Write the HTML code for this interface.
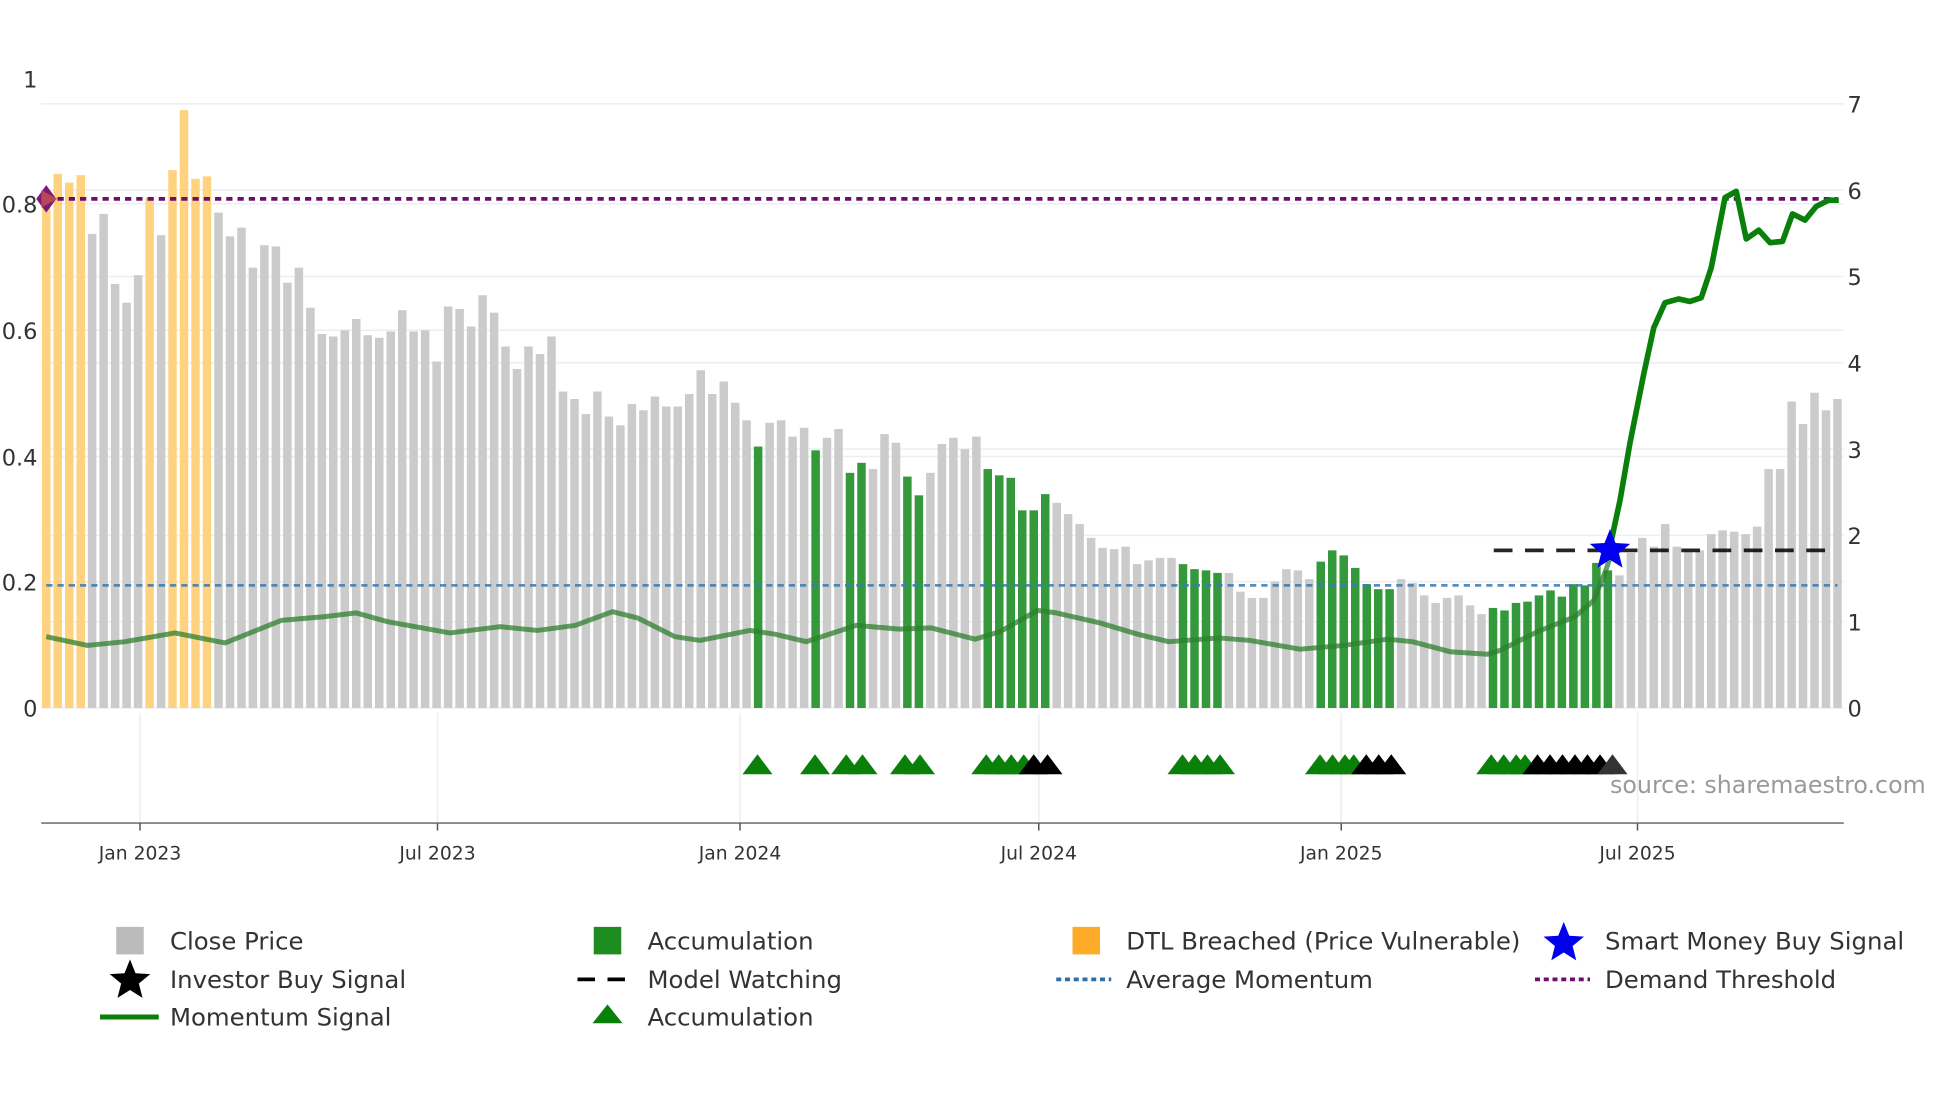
<!DOCTYPE html>
<html><head><meta charset="utf-8">
<style>
html,body{margin:0;padding:0;background:#fff;width:1960px;height:1102px;overflow:hidden}
svg{display:block}
text{font-family:"DejaVu Sans","Liberation Sans",sans-serif;fill:#333}
</style></head><body>
<svg id="c" width="1960" height="1102" viewBox="0 0 1568 881" preserveAspectRatio="none" xmlns="http://www.w3.org/2000/svg">
<g stroke="#eceef3" stroke-width="1.2">
<line x1="33" x2="1475" y1="83" y2="83"/><line x1="33" x2="1475" y1="152" y2="152"/><line x1="33" x2="1475" y1="221" y2="221"/><line x1="33" x2="1475" y1="290" y2="290"/><line x1="33" x2="1475" y1="359" y2="359"/><line x1="33" x2="1475" y1="428" y2="428"/><line x1="33" x2="1475" y1="497" y2="497"/>
<line x1="33" x2="1475" y1="163" y2="163"/><line x1="33" x2="1475" y1="264" y2="264"/><line x1="33" x2="1475" y1="365" y2="365"/><line x1="33" x2="1475" y1="465" y2="465"/><line x1="33" x2="1475" y1="566" y2="566"/>
<line x1="112" x2="112" y1="570" y2="658"/><line x1="350" x2="350" y1="570" y2="658"/><line x1="592" x2="592" y1="570" y2="658"/><line x1="831" x2="831" y1="570" y2="658"/><line x1="1073" x2="1073" y1="570" y2="658"/><line x1="1310" x2="1310" y1="570" y2="658"/>
</g>
<g id="bars"></g>
<line x1="37" x2="1470" y1="159" y2="159" stroke="#6b0f6b" stroke-width="3" stroke-dasharray="5 4"/>
<line x1="37" x2="1470" y1="468" y2="468" stroke="#3b7bb0" stroke-width="2.2" stroke-dasharray="5 4" opacity="0.85"/>
<line x1="1195" x2="1470" y1="440" y2="440" stroke="#000" stroke-width="3" stroke-dasharray="15 10" opacity="0.85"/>
<polyline fill="none" stroke="#2f7f2f" stroke-width="4" opacity="0.75" stroke-linejoin="round" points="37,509 70,516 100,513 140,506 180,514 225,496 260,493 285,490 310,497 360,506 400,501 430,504 460,500 490,489 510,494 540,509 560,512 600,504 620,507 645,513 685,500 720,503 745,502 780,511 800,505 830,488 845,490 880,498 910,507 935,513 975,510 1000,512 1040,519 1075,516 1110,511 1130,513 1160,521 1190,523 1200,520 1230,505 1260,493 1275,480 1285,455 1290,440"/>
<polyline fill="none" stroke="#0a800a" stroke-width="4.5" stroke-linejoin="round" points="1288,437 1296,400 1304,354 1315,299 1323,262 1332,242 1343,239 1352,241 1361,238 1369,214 1380,158 1389,153 1397,191 1407,184 1416,194 1426,193 1434,171 1444,176 1453,165 1463,160 1471,160"/>
<polygon points="37,148 45,159 37,170 29,159" fill="#7a1a7a"/>
<polygon points="33,152 46,159 33,166" fill="#c85050" opacity="0.8"/>
<polygon id="star" points="1288,423 1292.4,434.1 1304.2,434.8 1295.1,442.3 1298,453.8 1288,447.5 1278,453.8 1280.9,442.3 1271.8,434.8 1283.6,434.1" fill="#0000ee"/>
<g id="tris"></g>
<line x1="33" x2="1475" y1="658" y2="658" stroke="#888" stroke-width="1.5"/>
<g stroke="#555" stroke-width="1.2"><line x1="112" x2="112" y1="658" y2="664"/><line x1="350" x2="350" y1="658" y2="664"/><line x1="592" x2="592" y1="658" y2="664"/><line x1="831" x2="831" y1="658" y2="664"/><line x1="1073" x2="1073" y1="658" y2="664"/><line x1="1310" x2="1310" y1="658" y2="664"/></g>
<g font-size="15" text-anchor="middle">
<text x="112" y="687">Jan 2023</text><text x="350" y="687">Jul 2023</text><text x="592" y="687">Jan 2024</text><text x="831" y="687">Jul 2024</text><text x="1073" y="687">Jan 2025</text><text x="1310" y="687">Jul 2025</text>
</g>
<g font-size="18" text-anchor="end">
<text x="30" y="70">1</text><text x="30" y="170">0.8</text><text x="30" y="271">0.6</text><text x="30" y="372">0.4</text><text x="30" y="472">0.2</text><text x="30" y="573">0</text>
</g>
<g font-size="18">
<text x="1478" y="90">7</text><text x="1478" y="159">6</text><text x="1478" y="228">5</text><text x="1478" y="297">4</text><text x="1478" y="366">3</text><text x="1478" y="435">2</text><text x="1478" y="504">1</text><text x="1478" y="573">0</text>
</g>
<text x="1288" y="634" font-size="19" style="fill:#9a9a9a">source: sharemaestro.com</text>
<g font-size="19.5">
<rect x="93" y="741" width="22" height="22" fill="#bbb"/><text x="136" y="759">Close Price</text>
<rect x="475" y="741" width="22" height="22" fill="#1e8c1e"/><text x="518" y="759">Accumulation</text>
<rect x="858" y="741" width="22" height="22" fill="#ffab2a"/><text x="901" y="759">DTL Breached (Price Vulnerable)</text>
<polygon points="1251,737 1255.4,748.1 1267.2,748.8 1258.1,756.3 1261,767.8 1251,761.5 1241,767.8 1243.9,756.3 1234.8,748.8 1246.6,748.1" fill="#0000ee"/><text x="1284" y="759">Smart Money Buy Signal</text>
<polygon points="104,767 108.4,778.1 120.2,778.8 111.1,786.3 114,797.8 104,791.5 94,797.8 96.9,786.3 87.8,778.8 99.6,778.1" fill="#000"/><text x="136" y="790">Investor Buy Signal</text>
<line x1="462" x2="506" y1="783" y2="783" stroke="#000" stroke-width="3" stroke-dasharray="14 10"/><text x="518" y="790">Model Watching</text>
<line x1="845" x2="889" y1="783" y2="783" stroke="#2f6fa8" stroke-width="3" stroke-dasharray="4 3"/><text x="901" y="790">Average Momentum</text>
<line x1="1228" x2="1272" y1="783" y2="783" stroke="#6b0f6b" stroke-width="3" stroke-dasharray="4 3"/><text x="1284" y="790">Demand Threshold</text>
<line x1="80" x2="127" y1="813" y2="813" stroke="#0a800a" stroke-width="4"/><text x="136" y="820">Momentum Signal</text>
<polygon points="486,803 498,818 474,818" fill="#0a800a"/><text x="518" y="820">Accumulation</text>
</g>
</svg>
<script>
var d="o152 o139 o146 o140 g187 g171 g227 g242 g220 o158 g188 o136 o88 o143 o141 g170 g189 g182 g214 g196 g197 g226 g214 g246 g267 g269 g264 g255 g268 g270 g265 g248 g265 g264 g289 g245 g247 g261 g236 g250 g277 g295 g277 g283 g269 g313 g319 g331 g313 g333 g340 g323 g328 g317 g325 g325 g315 g296 g315 g305 g322 g336 G357 g338 g336 g349 g342 G360 g350 g343 G378 G370 g375 g347 g354 G381 G396 g378 g355 g350 g359 g349 G375 G380 G382 G408 G408 G395 g402 g411 g419 g430 g438 g439 g437 g451 g448 g446 g446 G451 G455 G456 G458 g458 g473 g478 g478 g465 g455 g456 g463 G449 G440 G444 G454 G467 G471 G471 g463 g466 g476 g482 g478 g476 g484 g491 G486 G488 G482 G481 G476 G472 G477 G467 G468 G450 G456 g460 g442 g430 g437 g419 g437 g441 g440 g427 g424 g425 g427 g421 g375 g375 g321 g339 g314 g328 g319".split(" ");
var col={o:"#ffd27f",g:"#cbcbcb",G:"#33993a"};
var s="",n=d.length,sp=(1470-37)/(n-1);
for(var i=0;i<n;i++){var c=d[i][0],t=+d[i].slice(1),x=37+i*sp;
s+='<rect x="'+(x-3.4).toFixed(1)+'" y="'+t+'" width="6.8" height="'+(566-t)+'" fill="'+col[c]+'"/>';}
document.getElementById("bars").innerHTML=s;
var tr=[[606,"#0a800a"],[652,"#0a800a"],[677,"#0a800a"],[690,"#0a800a"],[724,"#0a800a"],[736,"#0a800a"],[789,"#0a800a"],[799,"#0a800a"],[809,"#0a800a"],[819,"#0a800a"],[827,"#000"],[838,"#000"],[946,"#0a800a"],[956,"#0a800a"],[966,"#0a800a"],[976,"#0a800a"],[1056,"#0a800a"],[1066,"#0a800a"],[1076,"#0a800a"],[1083,"#0a800a"],[1093,"#000"],[1103,"#000"],[1113,"#000"],[1193,"#0a800a"],[1203,"#0a800a"],[1213,"#0a800a"],[1220,"#0a800a"],[1230,"#000"],[1240,"#000"],[1250,"#000"],[1260,"#000"],[1270,"#000"],[1280,"#000"],[1290,"#333"]];
var t2="";tr.forEach(function(a){t2+='<polygon points="'+a[0]+',603 '+(a[0]+12)+',619 '+(a[0]-12)+',619" fill="'+a[1]+'"/>';});
document.getElementById("tris").innerHTML=t2;
</script>
</body></html>
